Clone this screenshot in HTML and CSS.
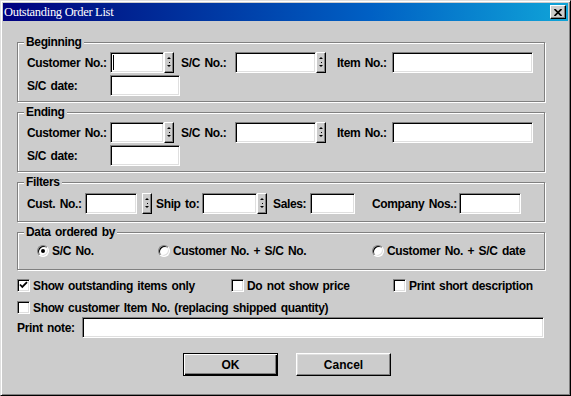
FILE: index.html
```html
<!DOCTYPE html>
<html lang="en">
<head>
  <meta charset="UTF-8">
  <title>Outstanding Order List</title>
  <link rel="stylesheet" href="styles.css">
</head>
<body>

  <div class="window">
    <div class="titlebar">
      <span class="title">Outstanding Order List</span>
      <button class="close" type="button">
        <svg width="8" height="7" viewBox="0 0 8 7"><path d="M0.5 0 L7.5 7 M7.5 0 L0.5 7" stroke="#000" stroke-width="1.7" fill="none"/></svg>
      </button>
    </div>

    <div class="content">
      <fieldset class="group group-range">
        <legend>Beginning</legend>
        <div class="row">
          <span class="lbl lbl-cust">Customer No.:</span>
          <span class="focus"><input class="field f-cust" type="text"></span>
          <span class="spin"></span>
          <span class="lbl lbl-sc">S/C No.:</span>
          <input class="field f-sc" type="text">
          <span class="spin"></span>
          <span class="lbl lbl-item">Item No.:</span>
          <input class="field f-item" type="text">
        </div>
        <div class="row">
          <span class="lbl lbl-cust">S/C date:</span>
          <input class="field f-date" type="text">
        </div>
      </fieldset>

      <fieldset class="group group-range">
        <legend>Ending</legend>
        <div class="row">
          <span class="lbl lbl-cust">Customer No.:</span>
          <input class="field f-cust" type="text">
          <span class="spin"></span>
          <span class="lbl lbl-sc">S/C No.:</span>
          <input class="field f-sc" type="text">
          <span class="spin"></span>
          <span class="lbl lbl-item">Item No.:</span>
          <input class="field f-item" type="text">
        </div>
        <div class="row">
          <span class="lbl lbl-cust">S/C date:</span>
          <input class="field f-date" type="text">
        </div>
      </fieldset>

      <fieldset class="group group-filters">
        <legend>Filters</legend>
        <div class="row">
          <span class="lbl lbl-fcust">Cust. No.:</span>
          <input class="field f-fcust" type="text">
          <span class="spin spin-apart"></span>
          <span class="lbl lbl-ship">Ship to:</span>
          <input class="field f-ship" type="text">
          <span class="spin"></span>
          <span class="lbl lbl-sales">Sales:</span>
          <input class="field f-sales" type="text">
          <span class="lbl lbl-comp">Company Nos.:</span>
          <input class="field f-comp" type="text">
        </div>
      </fieldset>

      <fieldset class="group group-order">
        <legend>Data ordered by</legend>
        <div class="opts">
          <label class="opt opt-1"><span class="radio checked"></span>S/C No.</label>
          <label class="opt opt-2"><span class="radio"></span>Customer No. + S/C No.</label>
          <label class="opt"><span class="radio"></span>Customer No. + S/C date</label>
        </div>
      </fieldset>

      <div class="checks">
        <label class="check chk-1">
          <span class="box"><svg width="11" height="11" viewBox="0 0 11 11"><path d="M2 4.5 L4.3 7 L9 2.2" stroke="#000" stroke-width="1.8" fill="none"/></svg></span>
          Show outstanding items only
        </label>
        <label class="check chk-2"><span class="box"></span>Do not show price</label>
        <label class="check"><span class="box"></span>Print short description</label>
      </div>
      <div class="checks checks-2">
        <label class="check"><span class="box"></span>Show customer Item No. (replacing shipped quantity)</label>
      </div>

      <div class="note">
        <span class="lbl lbl-note">Print note:</span>
        <input class="field f-note" type="text">
      </div>

      <div class="buttons">
        <button class="btn btn-default" type="button">OK</button>
        <button class="btn" type="button">Cancel</button>
      </div>
    </div>
  </div>

</body>
</html>
```

FILE: styles.css
```css
* {
  box-sizing: border-box;
}
body {
  margin: 0;
  font-family: "Liberation Sans", Arial, sans-serif;
  font-size: 12px;
  font-weight: bold;
  letter-spacing: -0.35px;
  word-spacing: 1.5px;
  color: #000;
  background: #cccccc;
}
.window {
  width: 571px;
  height: 396px;
  padding: 2px;
  background: #cccccc;
  border: 1px solid;
  border-color: #dfdfdf #000 #000 #dfdfdf;
  box-shadow: inset 1px 1px #fff, inset -1px -1px #808080;
}
.titlebar {
  height: 18px;
  display: flex;
  align-items: center;
  padding-left: 1px;
  background: linear-gradient(to right, #000080 0%, #00208f 20%, #0060c4 65%, #10a4d8 100%);
}
.title {
  font-family: "Liberation Serif", "Times New Roman", serif;
  font-weight: normal;
  font-size: 12.5px;
  letter-spacing: -0.3px;
  word-spacing: 0;
  color: #fff;
}
.close {
  margin-left: auto;
  margin-right: 2px;
  width: 16px;
  height: 14px;
  padding: 0;
  display: flex;
  align-items: center;
  justify-content: center;
  background: #cccccc;
  border: 1px solid;
  border-color: #fff #000 #000 #fff;
  box-shadow: inset -1px -1px #808080;
}
.content {
  padding: 14px 0 0 14px;
}
.group {
  width: 528px;
  min-width: 0;
  margin: 0 0 3px;
  padding: 3px 0 5px 9px;
  border: 1px solid #808080;
  box-shadow: inset 1px 1px #fff, 1px 1px #fff;
}
.group legend {
  margin-left: -3px;
  padding: 0 2px;
  line-height: 14px;
  background: #cccccc;
}
.group-filters {
  padding-top: 4px;
  padding-bottom: 7px;
}
.group-order {
  padding-top: 4px;
  padding-bottom: 10px;
}
.row {
  display: flex;
  align-items: center;
  height: 21px;
}
.row + .row {
  margin-top: 2px;
}
.lbl {
  flex: none;
}
.field {
  flex: none;
  height: 21px;
  margin: 0;
  padding: 0 3px;
  font: inherit;
  background: #fff;
  border: 1px solid;
  border-color: #808080 #fff #fff #808080;
  box-shadow: inset 1px 1px #000, inset -1px -1px #dfdfdf;
  outline: none;
}
.focus {
  position: relative;
  display: flex;
}
.focus::after {
  content: "";
  position: absolute;
  left: 3px;
  top: 3px;
  width: 1px;
  height: 15px;
  background: #000;
}
.spin {
  flex: none;
  width: 10px;
  height: 21px;
  display: flex;
  flex-direction: column;
  align-items: center;
  justify-content: space-between;
  padding: 4px 0 5px;
  background: #cccccc linear-gradient(#000, #000) center / 1px 1px no-repeat;
  border: 1px solid;
  border-color: #fff #000 #000 #fff;
  box-shadow: inset -1px -1px #808080;
}
.spin::before,
.spin::after {
  content: "";
  width: 0;
  height: 0;
  border-left: 2px solid transparent;
  border-right: 2px solid transparent;
}
.spin::before {
  border-bottom: 2px solid #000;
}
.spin::after {
  border-top: 2px solid #000;
}
.spin-apart {
  margin-left: 5px;
}

/* beginning / ending */
.lbl-cust { width: 83px; }
.f-cust { width: 54px; }
.lbl-sc { width: 54px; margin-left: 7px; }
.f-sc { width: 81px; }
.lbl-item { width: 55px; margin-left: 11px; }
.f-item { width: 141px; }
.f-date { width: 70px; }

/* filters */
.lbl-fcust { width: 58px; }
.f-fcust { width: 52px; }
.lbl-ship { width: 46px; margin-left: 4px; }
.f-ship { width: 55px; }
.lbl-sales { width: 37px; margin-left: 6px; }
.f-sales { width: 45px; }
.lbl-comp { width: 87px; margin-left: 17px; }
.f-comp { width: 62px; }

.opts {
  display: flex;
  align-items: center;
  height: 16px;
  padding-left: 10px;
}
.opt {
  display: flex;
  align-items: center;
  gap: 3px;
}
.opt-1 { width: 121px; }
.opt-2 { width: 214px; }
.radio {
  position: relative;
  width: 12px;
  height: 12px;
  border-radius: 50%;
  background: #fff;
  border: 1px solid;
  border-color: #808080 #fff #fff #808080;
  box-shadow: inset 1px 1px #000, inset -1px -1px #dfdfdf;
}
.radio.checked::after {
  content: "";
  position: absolute;
  left: 3px;
  top: 3px;
  width: 4px;
  height: 4px;
  border-radius: 50%;
  background: #000;
}
.checks {
  display: flex;
  align-items: center;
  height: 13px;
  margin-top: 9px;
}
.check {
  display: flex;
  align-items: center;
  gap: 3px;
}
.chk-1 { width: 214px; }
.chk-2 { width: 162px; }
.box {
  width: 13px;
  height: 13px;
  display: flex;
  align-items: center;
  justify-content: center;
  background: #fff;
  border: 1px solid;
  border-color: #808080 #fff #fff #808080;
  box-shadow: inset 1px 1px #000, inset -1px -1px #dfdfdf;
}
.note {
  display: flex;
  align-items: center;
  margin-top: 3px;
}
.lbl-note { width: 65px; }
.f-note { width: 462px; }
.buttons {
  display: flex;
  gap: 18px;
  margin-top: 15px;
  padding-left: 166px;
}
.btn {
  width: 95px;
  height: 23px;
  padding: 0;
  font: inherit;
  color: #000;
  background: #cccccc;
  border: 1px solid;
  border-color: #fff #000 #000 #fff;
  box-shadow: inset -1px -1px #808080, inset 1px 1px #dfdfdf;
}
.btn-default {
  border-color: #000;
  box-shadow: inset 1px 1px #fff, inset -1px -1px #000, inset -2px -2px #808080;
}
```
